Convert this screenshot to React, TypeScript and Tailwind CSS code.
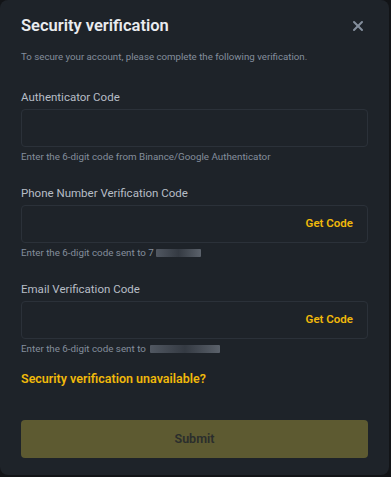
import { X } from "lucide-react";

type FieldProps = {
  label: string;
  hint: React.ReactNode;
  action?: string;
};

function Field({ label, hint, action }: FieldProps) {
  return (
    <div className="flex flex-col">
      <label className="text-[11.5px] leading-[16px] text-[#b7bdc6]">{label}</label>
      <div className="mt-[4px] flex h-[38px] items-center justify-end rounded-[4px] border border-[#2b3139] px-[14px]">
        {action && (
          <button className="text-[11.5px] font-semibold text-[#f0b90b]">{action}</button>
        )}
      </div>
      <p className="mt-[3px] text-[9.8px] leading-[14px] text-[#848e9c]">{hint}</p>
    </div>
  );
}

function Masked({ width }: { width: number }) {
  // blurred/pixelated personal data in the screenshot
  return (
    <span
      className="ml-[2px] inline-block h-[8px] translate-y-[1px] rounded-[1px] bg-gradient-to-r from-[#5e6570] via-[#3a4049] to-[#6b727c] opacity-80"
      style={{ width }}
    />
  );
}

export default function App() {
  return (
    <div className="min-h-screen bg-[#121417] font-['Roboto',sans-serif]">
      <div className="flex h-[475px] w-[389px] flex-col rounded-[8px] bg-[#1e2329] px-[21px]">
        <div className="flex items-center justify-between pt-[14px]">
          <h2 className="text-[16.5px] font-semibold leading-[24px] text-[#eaecef]">
            Security verification
          </h2>
          <X className="mr-[2px] h-[16px] w-[16px] text-[#848e9c]" strokeWidth={3} />
        </div>
        <p className="mt-[12px] text-[9.7px] leading-[14px] text-[#848e9c]">
          To secure your account, please complete the following verification.
        </p>

        <div className="mt-[25px] flex flex-col gap-[21px]">
          <Field
            label="Authenticator Code"
            hint="Enter the 6-digit code from Binance/Google Authenticator"
          />
          <Field
            label="Phone Number Verification Code"
            action="Get Code"
            hint={
              <>
                Enter the 6-digit code sent to 7<Masked width={45} />
              </>
            }
          />
          <Field
            label="Email Verification Code"
            action="Get Code"
            hint={
              <>
                Enter the 6-digit code sent to <Masked width={70} />
              </>
            }
          />
        </div>

        <a className="mt-[15px] text-[12.5px] font-semibold leading-[16px] text-[#f0b90b]">
          Security verification unavailable?
        </a>

        <button className="mt-[33px] h-[38px] rounded-[4px] bg-[#5d5a31] text-[12.5px] font-semibold text-[#2a2d2c]">
          Submit
        </button>
      </div>
    </div>
  );
}
